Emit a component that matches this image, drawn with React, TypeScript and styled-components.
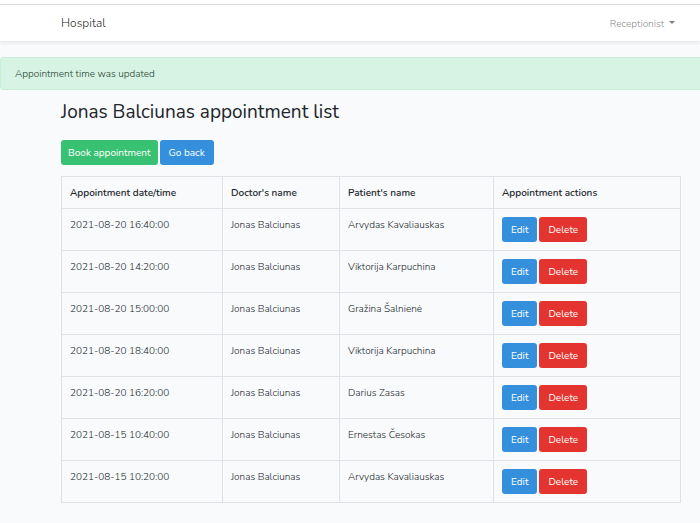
import React from "react";
import styled, { createGlobalStyle } from "styled-components";

const GlobalStyle = createGlobalStyle`
  *, *::before, *::after { box-sizing: border-box; }
  body {
    margin: 0;
    background: #f8fafc;
    color: #212529;
    font-family: Nunito, Lato, "Noto Sans", sans-serif;
    font-size: 10px;
    font-weight: 300;
    line-height: 16px;
    overflow-x: hidden;
  }
`;

const Navbar = styled.nav`
  display: flex;
  align-items: center;
  justify-content: space-between;
  height: 37px;
  margin-top: 4px;
  padding: 0 25px 0 61px;
  border-top: 1px solid #d9dbdf;
  background: #fff;
  box-shadow: 0 2px 3px rgba(0, 0, 0, 0.075);
`;

const TopStrip = styled.div`
  display: flow-root;
  background: #fff;
`;

const Brand = styled.a`
  color: rgba(0, 0, 0, 0.9);
  font-size: 12px;
  text-decoration: none;
`;

const UserMenu = styled.button`
  display: flex;
  align-items: center;
  gap: 5px;
  padding: 2px 0 0;
  border: 0;
  background: none;
  color: rgba(0, 0, 0, 0.5);
  font: inherit;

  &::after {
    content: "";
    margin-bottom: 3px;
    border-top: 3px solid currentColor;
    border-left: 3px solid transparent;
    border-right: 3px solid transparent;
  }
`;

const Alert = styled.div`
  margin-top: 16px;
  margin-right: -4px;
  padding: 8px 14px 7px;
  border: 1px solid #c7eed8;
  border-radius: 3px;
  background: #d7f3e3;
  color: #1d3f2f;
`;

const Container = styled.main`
  padding: 9px 19px 20px 61px;
`;

const Title = styled.h1`
  margin: 0;
  font-size: 19px;
  font-weight: 400;
  line-height: 26px;
`;

const Actions = styled.div<{ $spaced?: boolean }>`
  display: flex;
  gap: 2px;
  margin: ${(p) => (p.$spaced ? "15px 0 11px" : "0")};
`;

const tones = { green: "#38c172", blue: "#3490dc", red: "#e3342f" };

const Button = styled.button<{ $tone: keyof typeof tones; $compact?: boolean }>`
  height: 25px;
  padding: 0 ${(p) => (p.$compact ? 7 : 9)}px;
  border: 0;
  border-radius: 3px;
  background: ${(p) => tones[p.$tone]};
  color: #fff;
  font: inherit;
  font-weight: 400;
  white-space: nowrap;
`;

const Table = styled.table`
  width: 100%;
  table-layout: fixed;
  border-collapse: collapse;
`;

const Column = styled.col<{ $width?: number }>`
  width: ${(p) => (p.$width ? `${p.$width}px` : "auto")};
`;

const HeadCell = styled.th`
  height: 32px;
  padding: 0 8px;
  border: 1px solid #dee2e6;
  text-align: left;
  font-weight: 600;
`;

const Cell = styled.td`
  height: 42px;
  padding: 8px;
  border: 1px solid #dee2e6;
  vertical-align: top;
`;

const appointments = [
  ["2021-08-20 16:40:00", "Arvydas Kavaliauskas"],
  ["2021-08-20 14:20:00", "Viktorija Karpuchina"],
  ["2021-08-20 15:00:00", "Gražina Šalnienė"],
  ["2021-08-20 18:40:00", "Viktorija Karpuchina"],
  ["2021-08-20 16:20:00", "Darius Zasas"],
  ["2021-08-15 10:40:00", "Ernestas Česokas"],
  ["2021-08-15 10:20:00", "Arvydas Kavaliauskas"],
];

export default function App() {
  return (
    <>
      <GlobalStyle />
      <TopStrip>
        <Navbar>
          <Brand href="#">Hospital</Brand>
          <UserMenu type="button" aria-haspopup="menu">Receptionist</UserMenu>
        </Navbar>
      </TopStrip>
      <Alert role="status">Appointment time was updated</Alert>
      <Container>
        <Title>Jonas Balciunas appointment list</Title>
        <Actions $spaced>
          <Button type="button" $tone="green" $compact>Book appointment</Button>
          <Button type="button" $tone="blue">Go back</Button>
        </Actions>
        <Table>
          <colgroup>
            <Column $width={161} />
            <Column $width={117} />
            <Column $width={154} />
            <Column />
          </colgroup>
          <thead>
            <tr>
              <HeadCell scope="col">Appointment date/time</HeadCell>
              <HeadCell scope="col">Doctor's name</HeadCell>
              <HeadCell scope="col">Patient's name</HeadCell>
              <HeadCell scope="col">Appointment actions</HeadCell>
            </tr>
          </thead>
          <tbody>
            {appointments.map(([time, patient]) => (
              <tr key={time}>
                <Cell>{time}</Cell>
                <Cell>Jonas Balciunas</Cell>
                <Cell>{patient}</Cell>
                <Cell>
                  <Actions>
                    <Button type="button" $tone="blue">Edit</Button>
                    <Button type="button" $tone="red">Delete</Button>
                  </Actions>
                </Cell>
              </tr>
            ))}
          </tbody>
        </Table>
      </Container>
    </>
  );
}
